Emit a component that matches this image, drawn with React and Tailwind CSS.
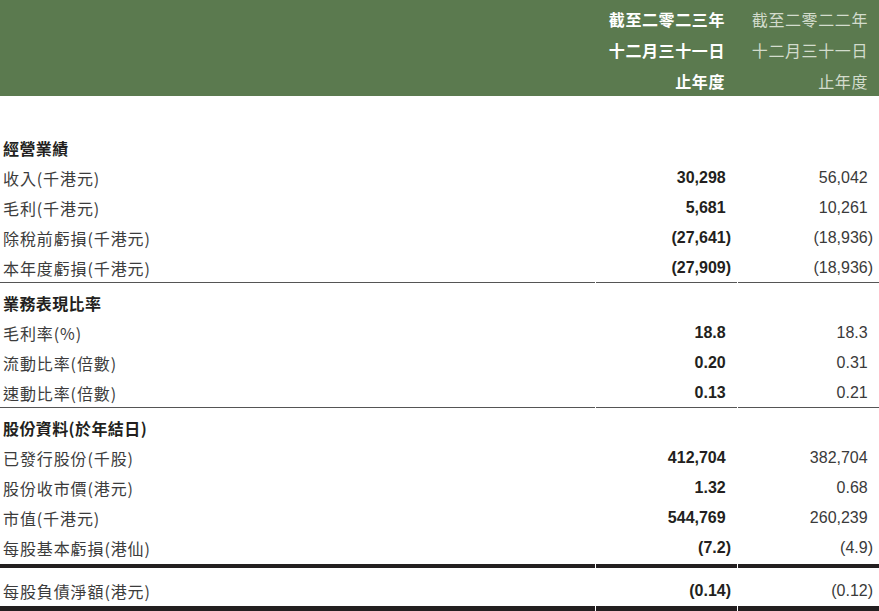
const CJK = "font-['Noto_Sans_CJK_TC','Noto_Sans_CJK_SC',sans-serif]";
const NUM = "font-['Liberation_Sans','Noto_Sans_CJK_TC',sans-serif]";
const COLS = "grid grid-cols-[595px_141px_141px] gap-x-[1px]";

const sections = [
  {
    title: "經營業績",
    rows: [
      ["收入(千港元)", "30,298", "56,042"],
      ["毛利(千港元)", "5,681", "10,261"],
      ["除稅前虧損(千港元)", "(27,641)", "(18,936)"],
      ["本年度虧損(千港元)", "(27,909)", "(18,936)"],
    ],
    line: "thin",
  },
  {
    title: "業務表現比率",
    rows: [
      ["毛利率(%)", "18.8", "18.3"],
      ["流動比率(倍數)", "0.20", "0.31"],
      ["速動比率(倍數)", "0.13", "0.21"],
    ],
    line: "thin",
  },
  {
    title: "股份資料(於年結日)",
    rows: [
      ["已發行股份(千股)", "412,704", "382,704"],
      ["股份收市價(港元)", "1.32", "0.68"],
      ["市值(千港元)", "544,769", "260,239"],
      ["每股基本虧損(港仙)", "(7.2)", "(4.9)"],
    ],
    line: "thick",
  },
  {
    title: null,
    rows: [["每股負債淨額(港元)", "(0.14)", "(0.12)"]],
    line: "bottom",
  },
];

const Num = ({ v }) => {
  if (v.startsWith("(")) return <span>{v}</span>;
  return (
    <span>
      {v}
      <span className="invisible">)</span>
    </span>
  );
};

/* thin rule sits inside the last row, thick rules follow it */
const Rule = ({ type }) => {
  if (type === "thin") return null;
  const h =
    type === "thick"
      ? "h-[4px] mt-[1px]"
      : "h-[5px]";
  return (
    <div className={COLS}>
      <div className={`${h} bg-[#231f20]`} />
      <div className={`${h} bg-[#231f20]`} />
      <div className={`${h} bg-[#231f20]`} />
    </div>
  );
};

const Row = ({ label, a, b, thin }) => {
  const border = thin
    ? "border-b-[1.5px] border-[#555]"
    : "";
  return (
    <div className={`${COLS} h-[30px]`}>
      <div
        className={`${CJK} ${border} flex items-center pl-[3px] text-[16px] tracking-[0.9px] text-[#3c3c3c]`}
      >
        {label}
      </div>
      <div
        className={`${NUM} ${border} flex items-center justify-end pr-[6px] text-[16px] font-bold text-[#231f20]`}
      >
        <Num v={a} />
      </div>
      <div
        className={`${NUM} ${border} flex items-center justify-end pr-[6px] text-[16px] text-[#3a3a3a]`}
      >
        <Num v={b} />
      </div>
    </div>
  );
};

export default function App() {
  return (
    <div className="w-[879px] h-[611px] bg-white overflow-hidden">
      {/* HEADER */}
      <div className={`${COLS} h-[96px] bg-[#5b7a4f] pt-[4px]`}>
        <div />
        <div
          className={`${CJK} flex flex-col items-end pr-[12px] text-[16px] font-bold tracking-[0.6px] text-white leading-[31px]`}
        >
          <span>截至二零二三年</span>
          <span>十二月三十一日</span>
          <span>止年度</span>
        </div>
        <div
          className={`${CJK} flex flex-col items-end pr-[11px] text-[16px] tracking-[0.6px] text-[#d3dccd] leading-[31px]`}
        >
          <span>截至二零二二年</span>
          <span>十二月三十一日</span>
          <span>止年度</span>
        </div>
      </div>

      {/* TABLE */}
      <div className="pt-[37px]">
        {sections.map((s, i) => (
          <div
            key={i}
            className={
              s.line === "bottom"
                ? "pt-[8px]"
                : i > 0
                ? "pt-[5px]"
                : ""
            }
          >
            {s.title && (
              <div
                className={`${CJK} h-[30px] flex items-center pl-[3px] text-[16px] font-bold tracking-[0.4px] text-[#231f20]`}
              >
                {s.title}
              </div>
            )}
            {s.rows.map((r, j) => (
              <Row
                key={j}
                label={r[0]}
                a={r[1]}
                b={r[2]}
                thin={
                  s.line === "thin" &&
                  j === s.rows.length - 1
                }
              />
            ))}
            <Rule type={s.line} />
          </div>
        ))}
      </div>
    </div>
  );
}
